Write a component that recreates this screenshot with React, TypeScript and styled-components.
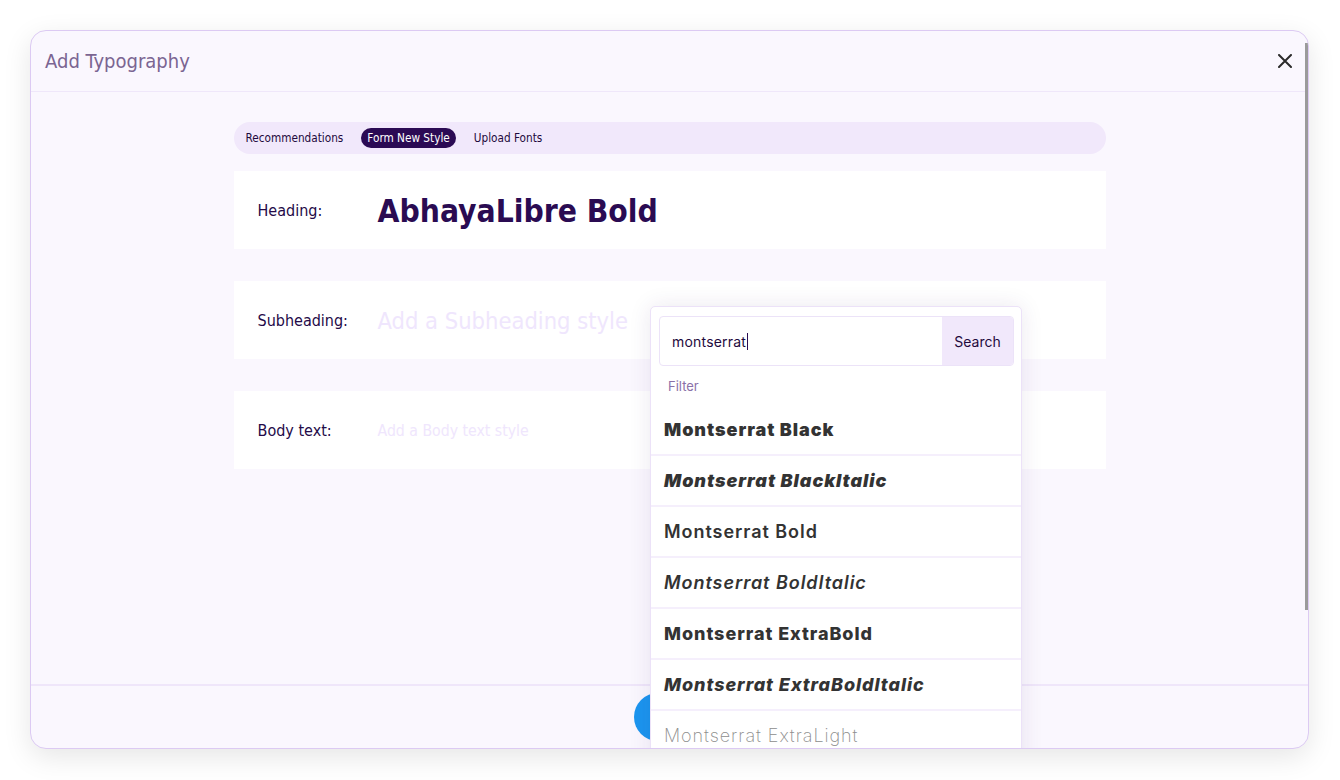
import React from "react";
import styled, { createGlobalStyle } from "styled-components";

const GlobalStyle = createGlobalStyle`
  html, body { margin: 0; padding: 0; background: #ffffff; }
  body { font-family: "DejaVu Sans Condensed", "Liberation Sans", sans-serif; }
  * { box-sizing: border-box; }
`;

const Page = styled.div`
  width: 1340px;
  height: 780px;
  padding: 30px 31px 31px 30px;
`;

const Modal = styled.div`
  position: relative;
  width: 1279px;
  height: 719px;
  border: 1px solid #dccaf3;
  border-radius: 16px;
  background: #faf7fe;
  overflow: hidden;
  display: flex;
  flex-direction: column;
  box-shadow: 0 8px 28px rgba(0, 0, 0, 0.1);
`;

const Header = styled.div`
  height: 61px;
  flex: none;
  display: flex;
  align-items: center;
  justify-content: space-between;
  padding: 0 15px 0 14px;
  border-bottom: 1px solid #efe7fa;
`;

const Title = styled.h2`
  margin: 0;
  font-size: 20px;
  font-weight: 400;
  color: #7b6592;
`;

const CloseButton = styled.button`
  border: none;
  background: none;
  padding: 0;
  width: 16px;
  height: 16px;
  display: flex;
  align-items: center;
  justify-content: center;
  cursor: pointer;
`;

const Body = styled.div`
  flex: 1;
  display: flex;
  justify-content: center;
  padding-top: 30px;
`;

const Column = styled.div`
  width: 872px;
  display: flex;
  flex-direction: column;
`;

const TabBar = styled.div`
  height: 32px;
  border-radius: 16px;
  background: #f1e8fb;
  display: flex;
  align-items: center;
  gap: 12px;
  padding: 0 6px;
  margin-bottom: 17px;
`;

const Tab = styled.div<{ $active?: boolean }>`
  height: 20px;
  line-height: 20px;
  padding: 0 6px;
  border-radius: 10px;
  font-size: 11.7px;
  color: ${(p) => (p.$active ? "#ffffff" : "#1f0a3d")};
  background: ${(p) => (p.$active ? "#2b0a54" : "transparent")};
`;

const StyleRows = styled.div`
  display: flex;
  flex-direction: column;
  gap: 32px;
`;

const StyleRow = styled.div`
  height: 78px;
  background: #ffffff;
  display: grid;
  grid-template-columns: 120px 1fr;
  align-items: center;
  padding-left: 24px;
`;

const RowLabel = styled.div`
  font-size: 16px;
  color: #240a48;
  padding-top: 1px;
`;

const RowValue = styled.div<{ $size: number; $bold?: boolean; $placeholder?: boolean }>`
  font-size: ${(p) => p.$size}px;
  font-weight: ${(p) => (p.$bold ? 700 : 400)};
  color: ${(p) => (p.$placeholder ? "#efe6fd" : "#2a0b52")};
  padding-top: 1px;
`;

const Footer = styled.div`
  height: 64px;
  flex: none;
  border-top: 2px solid #efe6fa;
  display: flex;
  align-items: center;
  justify-content: center;
`;

const SaveButton = styled.button`
  width: 72px;
  height: 48px;
  border: none;
  border-radius: 24px;
  background: #1b95ef;
  color: #fff;
  font-size: 14px;
  font-family: inherit;
`;

const ScrollThumb = styled.div`
  position: absolute;
  right: 0;
  top: 12px;
  width: 3px;
  height: 567px;
  background: #9b9b9b;
`;

const Dropdown = styled.div`
  position: absolute;
  left: 619px;
  top: 275px;
  width: 372px;
  height: 470px;
  background: #ffffff;
  border: 1px solid #ece2f8;
  border-radius: 5px;
  box-shadow: 0 0 22px rgba(60, 30, 100, 0.1);
  padding-top: 9px;
  font-family: Inter, "Liberation Sans", sans-serif;
`;

const SearchBox = styled.div`
  margin: 0 7px 0 8px;
  height: 50px;
  display: flex;
  border: 1px solid #ece3f8;
  border-radius: 4px;
  overflow: hidden;
`;

const SearchInput = styled.div`
  flex: 1;
  display: flex;
  align-items: center;
  padding-left: 12px;
  font-size: 14px;
  letter-spacing: 0.2px;
  color: #1f0a3d;
`;

const Caret = styled.span`
  display: inline-block;
  width: 1px;
  height: 17px;
  background: #2a0b52;
  margin-left: 1px;
`;

const SearchButton = styled.div`
  width: 71px;
  background: #f1e8fb;
  display: flex;
  align-items: center;
  justify-content: center;
  font-size: 14px;
  color: #1f0a3d;
`;

const FilterLabel = styled.div`
  height: 39px;
  display: flex;
  align-items: center;
  padding-left: 17px;
  font-size: 13px;
  color: #8a70a8;
`;

const FontList = styled.div`
  display: flex;
  flex-direction: column;
`;

const FontItem = styled.div<{ $weight: number; $italic?: boolean; $light?: boolean }>`
  height: 51px;
  flex: none;
  display: flex;
  align-items: center;
  padding-left: 13px;
  border-bottom: 2px solid #f5effc;
  font-size: 18px;
  font-weight: ${(p) => p.$weight};
  font-style: ${(p) => (p.$italic ? "italic" : "normal")};
  color: ${(p) => (p.$light ? "#8d8d8d" : "#333333")};
  letter-spacing: 0.95px;
`;

const fonts = [
  { name: "Montserrat Black", weight: 900 },
  { name: "Montserrat BlackItalic", weight: 900, italic: true },
  { name: "Montserrat Bold", weight: 600 },
  { name: "Montserrat BoldItalic", weight: 600, italic: true },
  { name: "Montserrat ExtraBold", weight: 800 },
  { name: "Montserrat ExtraBoldItalic", weight: 800, italic: true },
  { name: "Montserrat ExtraLight", weight: 200, light: true },
];

export default function App() {
  return (
    <>
      <GlobalStyle />
      <Page>
        <Modal>
          <Header>
            <Title>Add Typography</Title>
            <CloseButton aria-label="Close">
              <svg width="14" height="14" viewBox="0 0 14 14">
                <path d="M1 1 L13 13 M13 1 L1 13" stroke="#2b2b2b" strokeWidth="2" strokeLinecap="round" />
              </svg>
            </CloseButton>
          </Header>
          <Body>
            <Column>
              <TabBar>
                <Tab>Recommendations</Tab>
                <Tab $active>Form New Style</Tab>
                <Tab>Upload Fonts</Tab>
              </TabBar>
              <StyleRows>
                <StyleRow>
                  <RowLabel>Heading:</RowLabel>
                  <RowValue $size={31.5} $bold>AbhayaLibre Bold</RowValue>
                </StyleRow>
                <StyleRow>
                  <RowLabel>Subheading:</RowLabel>
                  <RowValue $size={23.5} $placeholder>Add a Subheading style</RowValue>
                </StyleRow>
                <StyleRow>
                  <RowLabel>Body text:</RowLabel>
                  <RowValue $size={15.7} $placeholder>Add a Body text style</RowValue>
                </StyleRow>
              </StyleRows>
            </Column>
          </Body>
          <Footer>
            <SaveButton>Save</SaveButton>
          </Footer>
          <ScrollThumb />
          <Dropdown>
            <SearchBox>
              <SearchInput>
                montserrat<Caret />
              </SearchInput>
              <SearchButton>Search</SearchButton>
            </SearchBox>
            <FilterLabel>Filter</FilterLabel>
            <FontList>
              {fonts.map((f) => (
                <FontItem key={f.name} $weight={f.weight} $italic={f.italic} $light={f.light}>
                  {f.name}
                </FontItem>
              ))}
            </FontList>
          </Dropdown>
        </Modal>
      </Page>
    </>
  );
}
